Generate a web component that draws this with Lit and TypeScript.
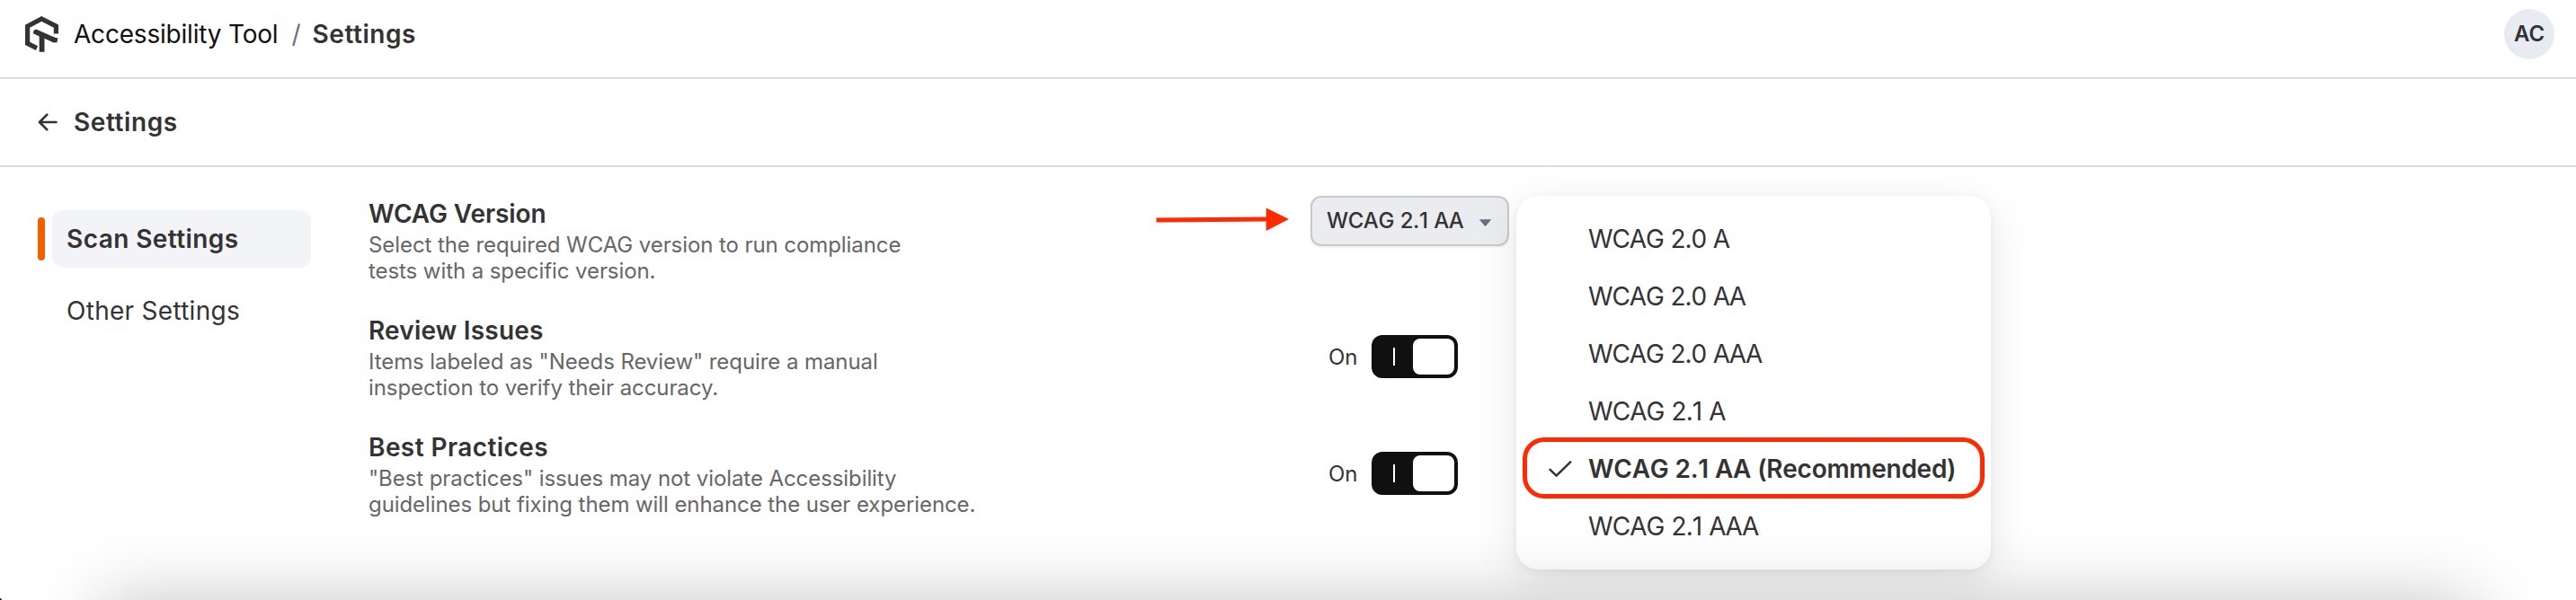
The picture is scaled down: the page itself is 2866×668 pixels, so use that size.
import { LitElement, html, css, svg, nothing } from "lit";
import { customElement, property } from "lit/decorators.js";

interface Option {
  label: string;
  tone: "v20" | "v21" | "selected";
}

const OPTIONS: Option[] = [
  { label: "WCAG 2.0 A", tone: "v20" },
  { label: "WCAG 2.0 AA", tone: "v20" },
  { label: "WCAG 2.0 AAA", tone: "v20" },
  { label: "WCAG 2.1 A", tone: "v21" },
  { label: "WCAG 2.1 AA (Recommended)", tone: "selected" },
  { label: "WCAG 2.1 AAA", tone: "v21" },
];

const logo = svg`
  <svg width="40" height="42" viewBox="27 17 40 42" fill="none" stroke="#333" stroke-width="5.2">
    <path d="M62.4 37.6V29.2L46.2 21L30.6 29.2V48.3L41 53.6" />
    <path d="M40 35.6L60.5 44.6" stroke-width="5.6" stroke-linecap="round" />
    <path d="M46.6 38V57.8" stroke-width="5.8" />
    <path d="M37.4 36.9L41.6 33.4" stroke-width="2.2" />
    <path d="M61.3 41.8L60.2 46.9" stroke-width="6.4" stroke-linejoin="round" />
  </svg>`;

@customElement("toggle-switch")
export class ToggleSwitch extends LitElement {
  static styles = css`
    :host {
      display: flex;
      align-items: center;
      gap: 16px;
      font: 400 24px/29px Inter, sans-serif;
      color: #333;
    }
    .label {
      width: 32px;
    }
    .track {
      box-sizing: border-box;
      width: 96px;
      height: 48px;
      padding: 4px;
      border-radius: 12px;
      background: #101010;
      display: flex;
      align-items: center;
      justify-content: space-between;
    }
    .mark {
      width: 2px;
      height: 20px;
      margin-left: 20px;
      background: #fff;
    }
    .knob {
      width: 46px;
      height: 40px;
      border-radius: 8px;
      background: #fff;
    }
  `;
  render() {
    return html`<span class="label">On</span>
      <span class="track"><span class="mark"></span><span class="knob"></span></span>`;
  }
}

@customElement("setting-row")
export class SettingRow extends LitElement {
  @property() heading = "";
  @property({ attribute: false }) lines: string[] = [];
  static styles = css`
    :host {
      display: grid;
      grid-template-columns: 1047px auto;
      justify-content: start;
      align-items: start;
      height: 130px;
    }
    .copy {
      display: flex;
      flex-direction: column;
      gap: 3px;
      padding-top: 3px;
      margin-left: -1px;
    }
    .heading {
      font: 600 28px/34px Inter, sans-serif;
      letter-spacing: var(--heading-spacing, 0);
      color: #333;
    }
    .text {
      font: 400 24px/29px Inter, sans-serif;
      letter-spacing: -0.08px;
      color: #666;
      white-space: nowrap;
    }
  `;
  render() {
    return html`<div class="copy">
        <div class="heading">${this.heading}</div>
        <div class="text">${this.lines.map((l, i) => html`${i ? html`<br />` : nothing}${l}`)}</div>
      </div>
      <slot></slot>`;
  }
}

@customElement("app-root")
export class AppRoot extends LitElement {
  static styles = css`
    :host {
      display: block;
      position: relative;
      height: 668px;
      overflow: hidden;
      background: #fff;
      color: #333;
      font: 400 28px/34px Inter, sans-serif;
    }
    svg {
      display: block;
      flex: none;
    }
    .top {
      box-sizing: border-box;
      height: 88px;
      border-bottom: 2px solid #ddd;
      padding: 10px 24px 20px 27px;
      display: flex;
      align-items: center;
    }
    .product {
      margin-left: 15px;
      letter-spacing: -0.2px;
      color: #101010;
    }
    .slash {
      margin-left: 15px;
      color: #667080;
    }
    .crumb {
      margin-left: 13px;
      font-weight: 600;
      letter-spacing: 0.55px;
    }
    .avatar {
      margin-left: auto;
      width: 56px;
      height: 56px;
      border-radius: 50%;
      background: #e9ebf3;
      font-size: 24px;
      font-weight: 600;
      line-height: 56px;
      text-align: center;
    }
    .page-head {
      box-sizing: border-box;
      height: 98px;
      border-bottom: 2px solid #ddd;
      padding-left: 41px;
      display: flex;
      align-items: center;
      gap: 17px;
      font-weight: 600;
      letter-spacing: 0.6px;
    }
    .body {
      display: flex;
      padding-left: 42px;
    }
    .nav {
      padding-top: 48px;
      width: 369px;
      flex: none;
      display: flex;
      flex-direction: column;
      gap: 16px;
    }
    .nav-row {
      display: flex;
      align-items: center;
      gap: 8px;
    }
    .marker {
      width: 8px;
      height: 48px;
      border-radius: 4px;
    }
    .nav-item {
      box-sizing: border-box;
      width: 288px;
      height: 64px;
      border-radius: 12px;
      padding: 15px 16px;
      letter-spacing: 0.28px;
    }
    .active .marker {
      background: #f06000;
    }
    .active .nav-item {
      background: #f3f4f7;
      font-weight: 600;
      letter-spacing: 0.42px;
    }
    .rows {
      padding-top: 32px;
    }
    .version {
      --heading-spacing: -0.1px;
    }
    .review {
      --heading-spacing: 0.2px;
    }
    .practices {
      --heading-spacing: 0.43px;
    }
    .select {
      box-sizing: border-box;
      width: 221px;
      height: 56px;
      border: 2px solid #c8c9cc;
      border-radius: 12px;
      background: #ebecf0;
      box-shadow: 0 2px 2px rgba(0, 0, 0, 0.05);
      padding: 0 17px 0 16px;
      display: flex;
      align-items: center;
      justify-content: space-between;
      font-size: 24px;
      font-weight: 500;
      line-height: 29px;
    }
    .select-label {
      margin-top: -2px;
      white-space: nowrap;
      font-kerning: none;
      letter-spacing: -0.4px;
      word-spacing: 0.7px;
    }
    .select svg {
      margin-top: 3px;
    }
    .toggle {
      margin: 25px 0 0 20px;
    }
    .pointer {
      position: absolute;
      left: 1286px;
      top: 230px;
    }
    .menu {
      position: absolute;
      left: 1687px;
      top: 218px;
      box-sizing: border-box;
      width: 528px;
      height: 416px;
      padding: 16px 8px;
      border-radius: 24px;
      background: #fff;
      box-shadow: 0 12px 48px rgba(0, 0, 0, 0.1), 0 2px 8px rgba(0, 0, 0, 0.06);
    }
    .option {
      height: 64px;
      padding-left: 28px;
      display: grid;
      grid-template-columns: 44px 1fr;
      align-items: center;
      white-space: nowrap;
      font-kerning: none;
    }
    .label {
      grid-column: 2;
    }
    .v20 {
      letter-spacing: -1.12px;
      word-spacing: 0.95px;
    }
    .v21 {
      letter-spacing: -0.92px;
      word-spacing: 0.95px;
    }
    .selected {
      font-weight: 600;
      letter-spacing: -0.28px;
      word-spacing: 0.3px;
    }
    .selected .label {
      grid-column: auto;
    }
    .highlight {
      position: absolute;
      box-sizing: border-box;
      left: 7px;
      top: 269px;
      width: 514px;
      height: 68px;
      border: 5px solid #ff2a00;
      border-radius: 24px;
    }
    .shade {
      position: absolute;
      left: 110px;
      right: 110px;
      top: 668px;
      height: 300px;
      border-radius: 24px;
      box-shadow: 0 0 80px rgba(0, 0, 0, 0.23);
    }
    .corner {
      position: absolute;
      left: 0;
      bottom: 0;
      width: 2px;
      height: 2px;
      border-top-right-radius: 2px;
      background: #222;
    }
  `;

  render() {
    return html`
      <header class="top">
        ${logo}
        <span class="product">Accessibility Tool</span>
        <span class="slash">/</span>
        <span class="crumb">Settings</span>
        <span class="avatar">AC</span>
      </header>
      <div class="page-head">
        <svg width="24" height="24" viewBox="0 0 24 24" fill="none" stroke="#333" stroke-width="2.7" stroke-linecap="round" stroke-linejoin="round">
          <path d="M21.5 12H3M11.3 3.6L3 12L11.3 20.4" />
        </svg>
        <span>Settings</span>
      </div>
      <main class="body">
        <nav class="nav">
          <div class="nav-row active"><span class="marker"></span><span class="nav-item">Scan Settings</span></div>
          <div class="nav-row"><span class="marker"></span><span class="nav-item">Other Settings</span></div>
        </nav>
        <section class="rows">
          <setting-row
            class="version"
            heading="WCAG Version"
            .lines=${["Select the required WCAG version to run compliance", "tests with a specific version."]}
          >
            <div class="select">
              <span class="select-label">WCAG 2.1 AA</span>
              <svg width="15" height="8" viewBox="0 0 15 8"><path d="M0.8 0.3H14.2L8.2 7.4Q7.5 8 6.8 7.4Z" fill="#667080" /></svg>
            </div>
          </setting-row>
          <setting-row
            class="review"
            heading="Review Issues"
            .lines=${['Items labeled as "Needs Review" require a manual', "inspection to verify their accuracy."]}
          >
            <toggle-switch class="toggle"></toggle-switch>
          </setting-row>
          <setting-row
            class="practices"
            heading="Best Practices"
            .lines=${['"Best practices" issues may not violate Accessibility', "guidelines but fixing them will enhance the user experience."]}
          >
            <toggle-switch class="toggle"></toggle-switch>
          </setting-row>
        </section>
      </main>
      <svg class="pointer" width="150" height="30" viewBox="0 0 150 30">
        <path d="M0.5 15L124 14" stroke="#ff2a00" stroke-width="5" />
        <path d="M122.7 1.5L148 14L122.7 27Z" fill="#ff2a00" />
      </svg>
      <div class="menu">
        ${OPTIONS.map(
          (o) => html`<div class="option ${o.tone}">
            ${o.tone === "selected"
              ? html`<svg width="26" height="20" viewBox="0 0 26 20" fill="none" stroke="#333" stroke-width="2.5" stroke-linecap="round" stroke-linejoin="round">
                  <path d="M1.6 10.8L8.6 17.6L24.2 2.4" />
                </svg>`
              : nothing}
            <span class="label">${o.label}</span>
          </div>`,
        )}
        <div class="highlight"></div>
      </div>
      <div class="shade"></div>
      <div class="corner"></div>
    `;
  }
}
